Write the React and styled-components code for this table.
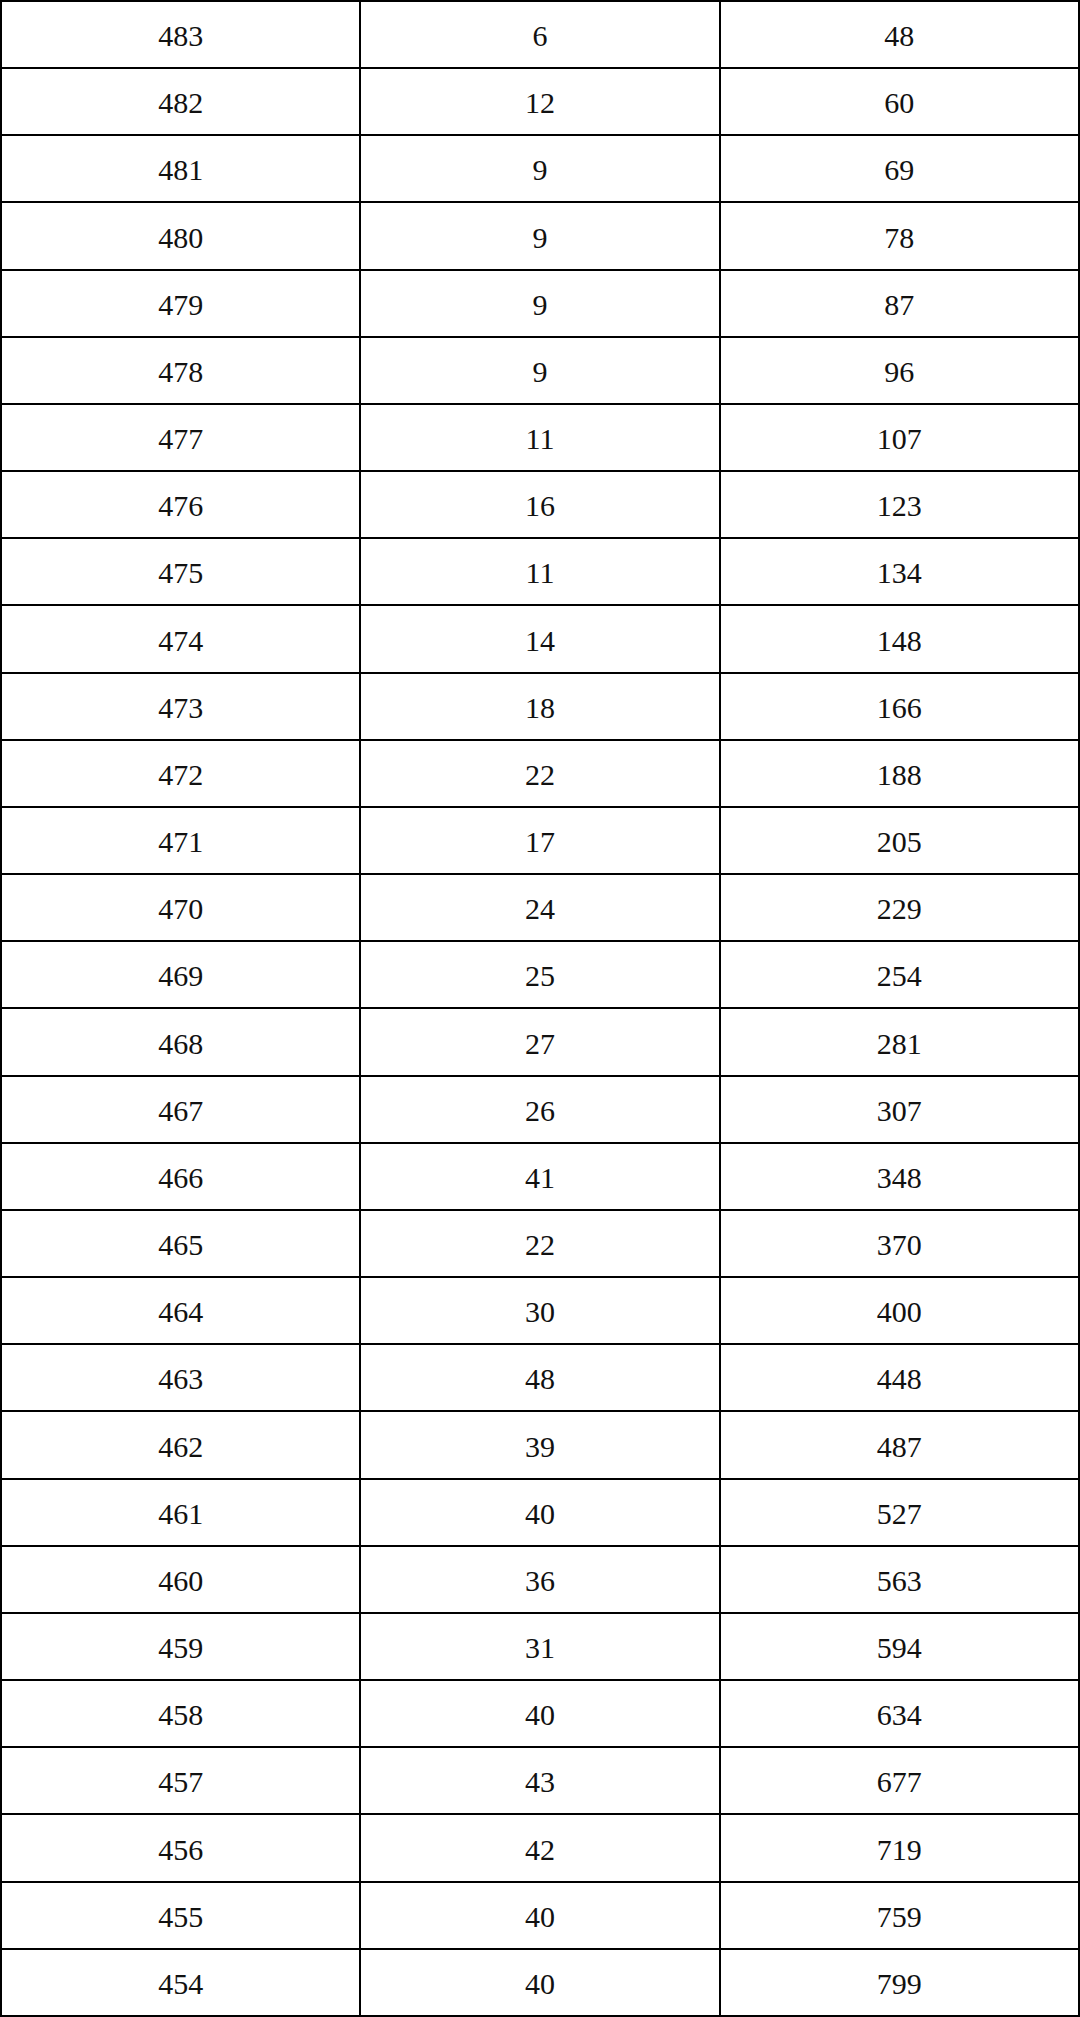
import React from 'react';
import styled, { createGlobalStyle } from 'styled-components';

const GlobalStyle = createGlobalStyle`
  html, body {
    margin: 0;
    padding: 0;
    background: #ffffff;
  }
`;

const Grid = styled.div`
  box-sizing: border-box;
  width: 1080px;
  height: 2017px;
  display: grid;
  grid-template-columns: repeat(3, 1fr);
  grid-template-rows: repeat(30, 1fr);
  border-top: 2px solid #000;
  border-left: 2px solid #000;
  background: #fff;
`;

const Cell = styled.div`
  box-sizing: border-box;
  display: flex;
  align-items: center;
  justify-content: center;
  padding-top: 3px;
  border-right: 2px solid #000;
  border-bottom: 2px solid #000;
  font-family: "Liberation Serif", "Noto Serif CJK SC", serif;
  font-size: 30px;
  color: #111;
`;

const rows = [
  [483, 6, 48], [482, 12, 60], [481, 9, 69], [480, 9, 78], [479, 9, 87],
  [478, 9, 96], [477, 11, 107], [476, 16, 123], [475, 11, 134], [474, 14, 148],
  [473, 18, 166], [472, 22, 188], [471, 17, 205], [470, 24, 229], [469, 25, 254],
  [468, 27, 281], [467, 26, 307], [466, 41, 348], [465, 22, 370], [464, 30, 400],
  [463, 48, 448], [462, 39, 487], [461, 40, 527], [460, 36, 563], [459, 31, 594],
  [458, 40, 634], [457, 43, 677], [456, 42, 719], [455, 40, 759], [454, 40, 799],
];

export default function App() {
  return (
    <>
      <GlobalStyle />
      <Grid>
        {rows.map((row) =>
          row.map((value, i) => <Cell key={`${row[0]}-${i}`}>{value}</Cell>)
        )}
      </Grid>
    </>
  );
}
